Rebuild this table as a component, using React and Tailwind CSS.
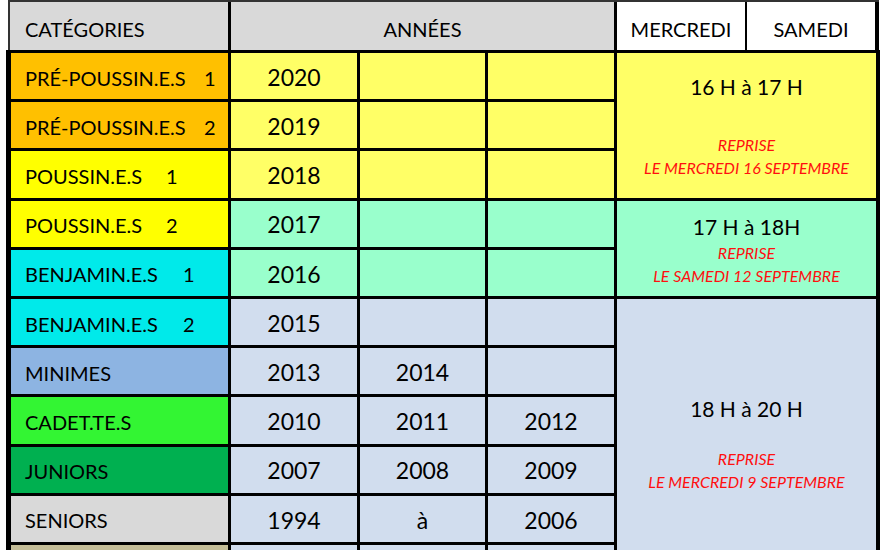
import React from "react";

const rows = [
  { cat: "PRÉ-POUSSIN.E.S", num: "1", w: "w-[179px]", catBg: "bg-[#ffc000]", bg: "bg-[#ffff66]", years: ["2020", "", ""] },
  { cat: "PRÉ-POUSSIN.E.S", num: "2", w: "w-[179px]", catBg: "bg-[#ffc000]", bg: "bg-[#ffff66]", years: ["2019", "", ""] },
  { cat: "POUSSIN.E.S", num: "1", w: "w-[141px]", catBg: "bg-[#ffff00]", bg: "bg-[#ffff66]", years: ["2018", "", ""] },
  { cat: "POUSSIN.E.S", num: "2", w: "w-[141px]", catBg: "bg-[#ffff00]", bg: "bg-[#99ffcc]", years: ["2017", "", ""] },
  { cat: "BENJAMIN.E.S", num: "1", w: "w-[158px]", catBg: "bg-[#00eaea]", bg: "bg-[#99ffcc]", years: ["2016", "", ""] },
  { cat: "BENJAMIN.E.S", num: "2", w: "w-[158px]", catBg: "bg-[#00eaea]", bg: "bg-[#d1ddee]", years: ["2015", "", ""] },
  { cat: "MINIMES", catBg: "bg-[#8db4e2]", bg: "bg-[#d1ddee]", years: ["2013", "2014", ""] },
  { cat: "CADET.TE.S", catBg: "bg-[#33f533]", bg: "bg-[#d1ddee]", years: ["2010", "2011", "2012"] },
  { cat: "JUNIORS", catBg: "bg-[#00b050]", bg: "bg-[#d1ddee]", years: ["2007", "2008", "2009"] },
  { cat: "SENIORS", catBg: "bg-[#d9d9d9]", bg: "bg-[#d1ddee]", years: ["1994", "à", "2006"] },
  { cat: "", catBg: "bg-[#c4bd97]", bg: "bg-[#d1ddee]", years: ["", "", ""] },
];

function Red({ children }) {
  return (
    <div className="text-[16px] leading-[23px] italic text-[#ff1010] text-center">{children}</div>
  );
}

export default function App() {
  return (
    <div
      className="w-[890px] h-[550px] overflow-hidden bg-white text-black"
      style={{ fontFamily: "Lato, 'Open Sans', sans-serif" }}
    >
      {/* header */}
      <div className="ml-[8px] w-[871px] h-[50px] flex border-t-2 border-l-2 border-[#333]">
        <div className="w-[218px] bg-[#d9d9d9] flex items-center pl-[15px] pt-[6px] text-[20px]">CATÉGORIES</div>
        <div className="w-[3px] bg-black" />
        <div className="w-[383px] bg-[#d9d9d9] flex items-center justify-center pt-[6px] text-[20px]">ANNÉES</div>
        <div className="w-[3px] bg-black" />
        <div className="w-[128px] bg-white flex items-center justify-center pt-[6px] text-[20px]">MERCREDI</div>
        <div className="w-[2px] bg-black" />
        <div className="w-[128px] bg-white flex items-center justify-center pt-[6px] text-[20px]">SAMEDI</div>
        <div className="w-[4px] bg-black" />
      </div>

      {/* body */}
      <div className="ml-[6px] w-[874px] bg-black pt-[3px] pl-[5px] pr-[4px] grid grid-cols-[217px_126px_125px_126px_259px] grid-rows-[repeat(11,46.2px)] gap-[3px]">
        <div className="col-start-5 row-start-1 row-span-3 bg-[#ffff66] flex flex-col items-center pt-[22px]">
          <div className="text-[21px] leading-[24px]">16 H à 17 H</div>
          <div className="mt-[34px]">
            <Red>REPRISE</Red>
            <Red>LE MERCREDI 16 SEPTEMBRE</Red>
          </div>
        </div>
        <div className="col-start-5 row-start-4 row-span-2 bg-[#99ffcc] flex flex-col items-center pt-[14px]">
          <div className="text-[21px] leading-[24px]">17 H à 18H</div>
          <div className="mt-[2px]">
            <Red>REPRISE</Red>
            <Red>LE SAMEDI 12 SEPTEMBRE</Red>
          </div>
        </div>
        <div className="col-start-5 row-start-6 row-span-6 bg-[#d1ddee] flex flex-col items-center pt-[98px]">
          <div className="text-[21px] leading-[24px]">18 H à 20 H</div>
          <div className="mt-[26px]">
            <Red>REPRISE</Red>
            <Red>LE MERCREDI 9 SEPTEMBRE</Red>
          </div>
        </div>

        {rows.map((r, i) => (
          <React.Fragment key={i}>
            <div className={`${r.catBg} flex items-center pl-[14px] pt-[3px] text-[20px] whitespace-nowrap`}>
              {r.num ? (
                <>
                  <span className={`inline-block ${r.w}`}>{r.cat}</span>
                  <span>{r.num}</span>
                </>
              ) : (
                <span>{r.cat}</span>
              )}
            </div>
            {r.years.map((y, j) => (
              <div key={j} className={`${r.bg} flex items-center justify-center pt-[2px] text-[23px]`}>
                {y}
              </div>
            ))}
          </React.Fragment>
        ))}
      </div>
    </div>
  );
}
